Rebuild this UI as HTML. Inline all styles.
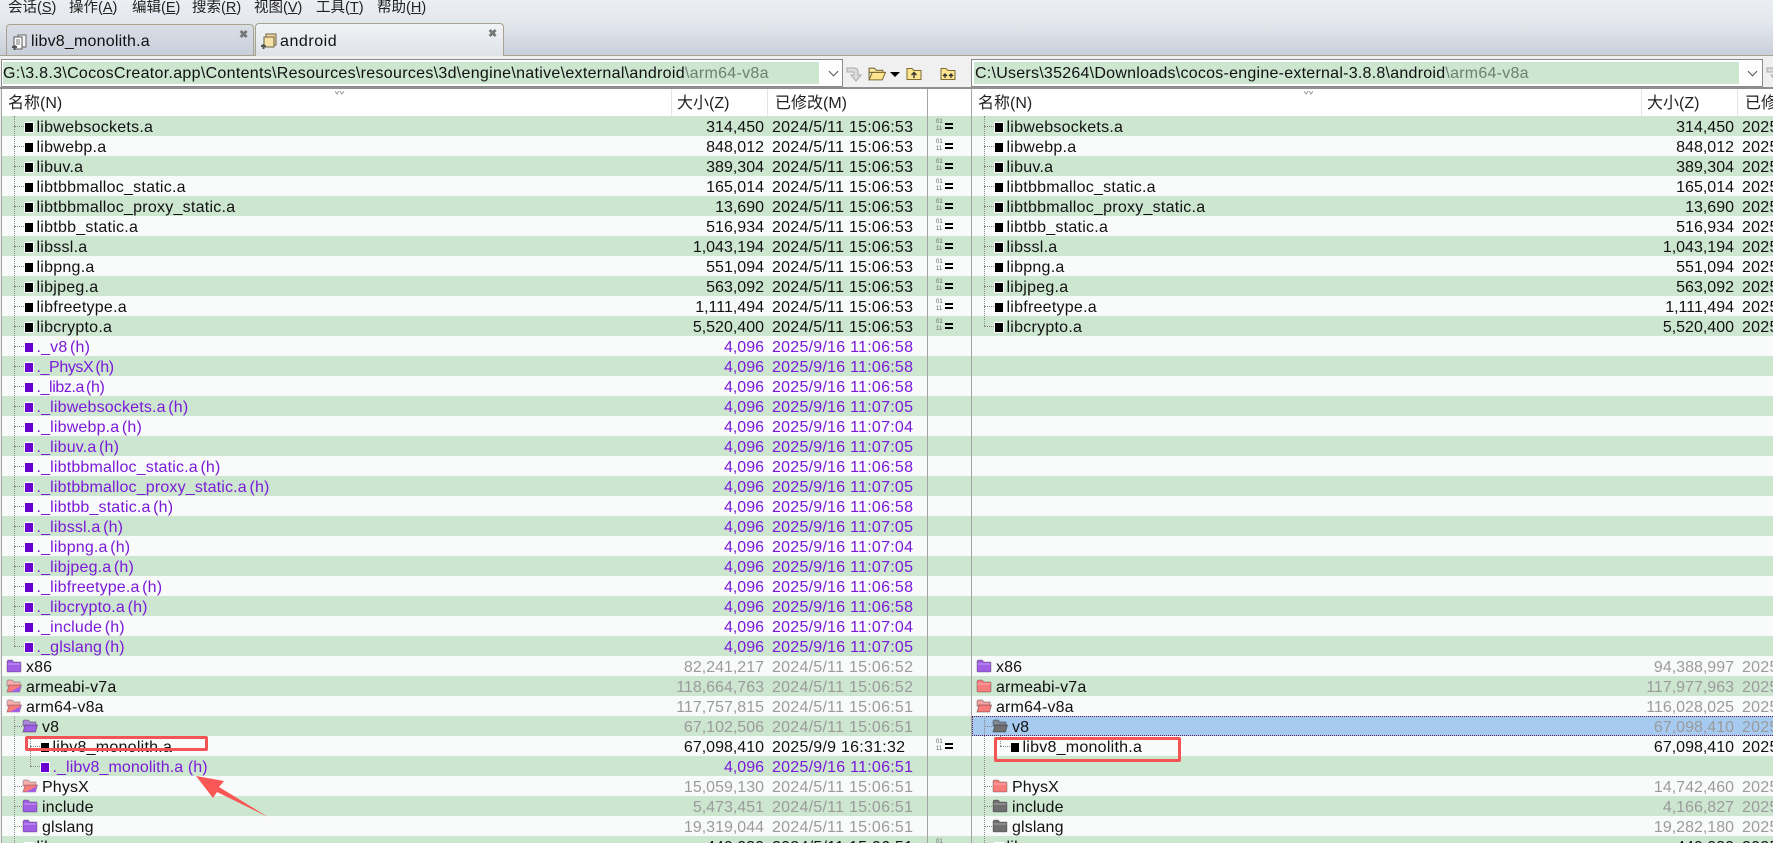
<!DOCTYPE html>
<html><head><meta charset="utf-8"><title>Beyond Compare</title>
<style>
*{margin:0;padding:0}
html,body{width:1773px;height:843px;overflow:hidden;background:#f0f0f0}
body{position:relative;font:16px/20px "Liberation Sans","Noto Sans CJK SC",sans-serif;color:#111}
.abs,.top,.tab,.m,.ab,.pane,.hd,.sep{position:absolute}
.top{left:0;top:0;width:1773px;height:55px;background:linear-gradient(#eceef3,#e4e7ed 40%,#c9cfda)}
.m{top:-2px;font-size:14.5px;color:#222}
.tab{height:31px;border:1px solid #a8a38f;border-bottom:0;border-radius:4px 4px 0 0;box-sizing:border-box;line-height:33px}
.tab span{position:absolute;top:0}
.tab u{position:absolute;text-decoration:none;font-size:11px;font-weight:bold;color:#777;line-height:12px}
.line{position:absolute;left:0;top:55px;width:1773px;height:1px;background:#a8a38f}
.tb{position:absolute;left:0;top:56px;width:1773px;height:31px;background:#f0f0f0}
.ab{top:59px;height:28px;background:#fff;border:1px solid #8a8a8a;box-sizing:border-box}
.ab div{position:absolute;top:2px;height:22px;background:#cde6d0;white-space:nowrap;line-height:24px;overflow:hidden;letter-spacing:.3px}
.ab em{font-style:normal;color:#6e7f72}
.ch{position:absolute;width:6px;height:6px;border:solid #555;border-width:0 1px 1px 0;transform:rotate(45deg)}
.rule{position:absolute;left:0;top:87px;width:1773px;height:2px;background:#8f8f8f}
.hd{top:89px;height:27px;background:#fff}
.hd span{position:absolute;top:5px;color:#222;white-space:nowrap}
.hd i{position:absolute;top:0;width:1px;height:27px;background:#e4e4e4}
.pane{top:116px;height:727px;overflow:hidden}
.r{position:relative;height:20px;width:925px;background:#f9fbfa;white-space:nowrap}
.r:nth-child(odd){background:#cde6d0}
.r b,.r i,.r s{position:absolute;top:2px;font-weight:normal;font-style:normal;text-decoration:none}
.r b{left:34.5px;letter-spacing:.25px}
.r i{right:163px}
.r s{left:770px;letter-spacing:.25px}
.r em{position:absolute;left:22px;top:6px;width:8px;height:9px;background:#000;border:1px solid #fff}
.r::before{content:"";position:absolute;left:12px;top:10px;width:10px;border-top:1px dotted #888}
.n::before{display:none}
.p{color:#7a1ad8}.p em{background:#6a00d0}
.p b{letter-spacing:.17px;word-spacing:-2px}
.g{color:#9b9b9b}.g b{color:#111;letter-spacing:.13px}
.f{position:absolute;left:4px;top:3px;width:16px;height:14px}
.n b{left:24px}
.d1::before{left:12px;width:8px;display:block}
.d1 .f{left:20px}
.d1 b{left:40px}
.d2::before{left:28px;width:10px}
.d2 em{left:38px}
.d2 b{left:50.5px}
.pu{color:#a05fe4}.pi{color:#f77d7d}.gy{color:#6f6f6f}
.sel{background:#a6caf0!important}
.sel::after{content:"";position:absolute;inset:0;border:1px dotted #5a1f55;box-sizing:border-box}
.vl{position:absolute;width:0;border-left:1px dotted #888}
.sep{top:89px;width:1px;height:754px;background:#a3a3a3}
.gut{position:absolute;left:928px;top:116px;width:43px;height:727px;overflow:hidden}
.gut div{position:relative;height:20px;background:#f9fbfa}
.gut div:nth-child(odd){background:#cde6d0}
.gut .e::before{content:"01";position:absolute;left:8px;top:3px;font:6px/7px "Liberation Sans",sans-serif;color:#666}
.gut .e::after{content:"";position:absolute;left:17px;top:7px;width:8px;height:2px;border:solid #000;border-width:2px 0;}
.gut .e span{position:absolute;left:8px;top:10px;font:6px/7px "Liberation Sans",sans-serif;color:#666}
</style></head><body>
<svg width="0" height="0" style="position:absolute"><defs>
<symbol id="fc" viewBox="0 0 16 14"><path d="M1 3Q1 1 3 1H6L8 3H14Q15 3 15 4V12Q15 13 14 13H2Q1 13 1 12Z" fill="currentColor" stroke="#0004"/><path d="M1.5 5H14.5" stroke="#fff6"/></symbol>
<symbol id="fo" viewBox="0 0 16 14"><path d="M1 3Q1 1 3 1H6L8 3H14V7H1Z" fill="currentColor" fill-opacity=".7" stroke="#0005"/><path d="M1 13L3 6H15.5L13.5 13Z" fill="currentColor" stroke="#0005"/></symbol>
<symbol id="fm" viewBox="0 0 16 14"><path d="M1 3Q1 1 3 1H6L8 3H14V7H1Z" fill="#f7b0b0" stroke="#0004"/><path d="M1 13L3 6H15.5L13.5 13Z" fill="#f77d7d" stroke="#0004"/><path d="M4 13L15 7L13.5 13Z" fill="#a05fe4"/></symbol>
<symbol id="yf" viewBox="0 0 16 14"><path d="M1 2H6L8 4H15V13H1Z" fill="#fce58e" stroke="#7e6c35"/></symbol>
<symbol id="yo" viewBox="0 0 17 14"><path d="M1 2H6L8 4H14V6H1Z" fill="#fbe9a8" stroke="#7e6c35"/><path d="M1 13L4 6H16.5L13.5 13Z" fill="#fce58e" stroke="#7e6c35"/><path d="M1 2V13" stroke="#7e6c35"/></symbol>
</defs></svg>

<div class="top"></div>
<span class="m" style="left:8px">会话(<u>S</u>)</span>
<span class="m" style="left:69px">操作(<u>A</u>)</span>
<span class="m" style="left:132px">编辑(<u>E</u>)</span>
<span class="m" style="left:192px">搜索(<u>R</u>)</span>
<span class="m" style="left:254px">视图(<u>V</u>)</span>
<span class="m" style="left:316px">工具(<u>T</u>)</span>
<span class="m" style="left:377px">帮助(<u>H</u>)</span>

<div class="tab" style="left:6px;top:24px;width:248px;background:linear-gradient(#dadee6,#c9cfda)">
<svg class="abs" style="left:4px;top:9px" width="18" height="18" viewBox="0 0 18 18"><path d="M7 1H15V13H7Z" fill="#f4f4f4" stroke="#666"/><path d="M3 3H11V15H3Z" fill="#fff" stroke="#555"/><path d="M5 6H9M5 8H9M5 10H9" stroke="#777"/><path d="M1 13H6M3.5 11V16" stroke="#555" stroke-width="2"/></svg>
<span style="left:24px;letter-spacing:.2px">libv8_monolith.a</span><u style="left:232px;top:4px">✖</u></div>
<div class="tab" style="left:255px;top:23px;width:249px;height:33px;background:linear-gradient(#f1f3f6,#dfe2e9);z-index:2;line-height:35px">
<svg class="abs" style="left:4px;top:8px" width="18" height="18" viewBox="0 0 18 18"><path d="M6 2H16V13H6Z" fill="#f0d9a0" stroke="#6c6242"/><path d="M4 5H14V15H4Z" fill="#f7e3a8" stroke="#6c6242"/><path d="M1 14H6M3.5 12V17" stroke="#555" stroke-width="2"/></svg>
<span style="left:24px;letter-spacing:.55px">android</span><u style="left:232px;top:4px">✖</u></div>
<div class="line"></div>
<div class="tb"></div>

<div class="ab" style="left:1px;width:842px"><div style="left:1px;width:816px">G:\3.8.3\CocosCreator.app\Contents\Resources\resources\3d\engine\native\external\android<em>\arm64-v8a</em></div><span class="ch" style="left:828px;top:8px"></span></div>
<svg class="abs" style="left:846px;top:66px" width="16" height="16" viewBox="0 0 16 16"><path d="M1 2H8Q12 2 12 6V9H15L10 15L5 9H8V6H1Z" fill="#ddd" stroke="#aaa"/></svg>
<svg class="abs" style="left:868px;top:66px" width="18" height="15"><use href="#yo"/></svg>
<div class="abs" style="left:890px;top:72px;width:0;height:0;border:5px solid transparent;border-top:5px solid #000;border-bottom:0"></div>
<svg class="abs" style="left:906px;top:66px" width="16" height="15"><use href="#yf"/><path d="M8 12V7M5.5 9L8 6.5L10.5 9" stroke="#333" fill="none" stroke-width="1.4"/></svg>
<svg class="abs" style="left:940px;top:66px" width="16" height="15"><use href="#yf"/><path d="M5 12V8M3 10L5 8L7 10M11 12V8M9 10L11 8L13 10" stroke="#333" fill="none" stroke-width="1.3"/></svg>
<div class="ab" style="left:971px;width:792px"><div style="left:2px;width:765px;padding-left:1px;box-sizing:border-box;letter-spacing:.25px">C:\Users\35264\Downloads\cocos-engine-external-3.8.8\android<em>\arm64-v8a</em></div><span class="ch" style="left:777px;top:8px"></span></div>
<svg class="abs" style="left:1766px;top:66px" width="16" height="16" viewBox="0 0 16 16"><path d="M1 2H8Q12 2 12 6V9H15L10 15L5 9H8V6H1Z" fill="#ddd" stroke="#aaa"/></svg>
<div class="rule"></div>

<div class="hd" style="left:2px;width:925px"><span style="left:6px">名称(N)</span><i style="left:669px"></i><span style="left:675px">大小(Z)</span><i style="left:765px"></i><span style="left:773px">已修改(M)</span><svg class="abs" style="left:333px;top:2px" width="9" height="4"><path d="M0 0L2 3L4 0M5 0L7 3L9 0" fill="none" stroke="#999"/></svg></div>
<div class="hd" style="left:928px;width:43px"></div>
<div class="hd" style="left:972px;width:801px;overflow:hidden"><span style="left:6px">名称(N)</span><i style="left:669px"></i><span style="left:675px">大小(Z)</span><i style="left:765px"></i><span style="left:773px">已修改(M)</span><svg class="abs" style="left:332px;top:2px" width="9" height="4"><path d="M0 0L2 3L4 0M5 0L7 3L9 0" fill="none" stroke="#999"/></svg></div>

<div class="pane" style="left:2px;width:925px">
<div class="r"><em></em><b>libwebsockets.a</b><i>314,450</i><s>2024/5/11 15:06:53</s></div>
<div class="r"><em></em><b>libwebp.a</b><i>848,012</i><s>2024/5/11 15:06:53</s></div>
<div class="r"><em></em><b>libuv.a</b><i>389,304</i><s>2024/5/11 15:06:53</s></div>
<div class="r"><em></em><b>libtbbmalloc_static.a</b><i>165,014</i><s>2024/5/11 15:06:53</s></div>
<div class="r"><em></em><b>libtbbmalloc_proxy_static.a</b><i>13,690</i><s>2024/5/11 15:06:53</s></div>
<div class="r"><em></em><b>libtbb_static.a</b><i>516,934</i><s>2024/5/11 15:06:53</s></div>
<div class="r"><em></em><b>libssl.a</b><i>1,043,194</i><s>2024/5/11 15:06:53</s></div>
<div class="r"><em></em><b>libpng.a</b><i>551,094</i><s>2024/5/11 15:06:53</s></div>
<div class="r"><em></em><b>libjpeg.a</b><i>563,092</i><s>2024/5/11 15:06:53</s></div>
<div class="r"><em></em><b>libfreetype.a</b><i>1,111,494</i><s>2024/5/11 15:06:53</s></div>
<div class="r"><em></em><b>libcrypto.a</b><i>5,520,400</i><s>2024/5/11 15:06:53</s></div>
<div class="r p"><em></em><b>._v8 (h)</b><i>4,096</i><s>2025/9/16 11:06:58</s></div>
<div class="r p"><em></em><b style="letter-spacing:-.4px">._PhysX (h)</b><i>4,096</i><s>2025/9/16 11:06:58</s></div>
<div class="r p"><em></em><b style="letter-spacing:-.4px">._libz.a (h)</b><i>4,096</i><s>2025/9/16 11:06:58</s></div>
<div class="r p"><em></em><b>._libwebsockets.a (h)</b><i>4,096</i><s>2025/9/16 11:07:05</s></div>
<div class="r p"><em></em><b>._libwebp.a (h)</b><i>4,096</i><s>2025/9/16 11:07:04</s></div>
<div class="r p"><em></em><b>._libuv.a (h)</b><i>4,096</i><s>2025/9/16 11:07:05</s></div>
<div class="r p"><em></em><b>._libtbbmalloc_static.a (h)</b><i>4,096</i><s>2025/9/16 11:06:58</s></div>
<div class="r p"><em></em><b>._libtbbmalloc_proxy_static.a (h)</b><i>4,096</i><s>2025/9/16 11:07:05</s></div>
<div class="r p"><em></em><b>._libtbb_static.a (h)</b><i>4,096</i><s>2025/9/16 11:06:58</s></div>
<div class="r p"><em></em><b>._libssl.a (h)</b><i>4,096</i><s>2025/9/16 11:07:05</s></div>
<div class="r p"><em></em><b>._libpng.a (h)</b><i>4,096</i><s>2025/9/16 11:07:04</s></div>
<div class="r p"><em></em><b>._libjpeg.a (h)</b><i>4,096</i><s>2025/9/16 11:07:05</s></div>
<div class="r p"><em></em><b>._libfreetype.a (h)</b><i>4,096</i><s>2025/9/16 11:06:58</s></div>
<div class="r p"><em></em><b>._libcrypto.a (h)</b><i>4,096</i><s>2025/9/16 11:06:58</s></div>
<div class="r p"><em></em><b>._include (h)</b><i>4,096</i><s>2025/9/16 11:07:04</s></div>
<div class="r p"><em></em><b>._glslang (h)</b><i>4,096</i><s>2025/9/16 11:07:05</s></div>
<div class="r g n"><svg class="f pu"><use href="#fc"/></svg><b>x86</b><i>82,241,217</i><s>2024/5/11 15:06:52</s></div>
<div class="r g n"><svg class="f"><use href="#fm"/></svg><b>armeabi-v7a</b><i>118,664,763</i><s>2024/5/11 15:06:52</s></div>
<div class="r g n"><svg class="f"><use href="#fm"/></svg><b>arm64-v8a</b><i>117,757,815</i><s>2024/5/11 15:06:51</s></div>
<div class="r g d1"><svg class="f pu"><use href="#fo"/></svg><b>v8</b><i>67,102,506</i><s>2024/5/11 15:06:51</s></div>
<div class="r d2"><em></em><b>libv8_monolith.a</b><i>67,098,410</i><s>2025/9/9 16:31:32</s></div>
<div class="r p d2"><em></em><b style="word-spacing:0;letter-spacing:.1px">._libv8_monolith.a (h)</b><i>4,096</i><s>2025/9/16 11:06:51</s></div>
<div class="r g d1"><svg class="f"><use href="#fm"/></svg><b>PhysX</b><i>15,059,130</i><s>2024/5/11 15:06:51</s></div>
<div class="r g d1"><svg class="f pu"><use href="#fc"/></svg><b>include</b><i>5,473,451</i><s>2024/5/11 15:06:51</s></div>
<div class="r g d1"><svg class="f pu"><use href="#fc"/></svg><b>glslang</b><i>19,319,044</i><s>2024/5/11 15:06:51</s></div>
<div class="r"><em></em><b>lib</b><i>449,030</i><s>2024/5/11 15:06:51</s></div>
<span class="vl" style="left:12px;top:0;height:530px"></span>
<span class="vl" style="left:12px;top:600px;height:127px"></span>
<span class="vl" style="left:28px;top:620px;height:30px"></span>
</div>

<div class="gut">
<div class="e"><span>11</span></div><div class="e"><span>11</span></div><div class="e"><span>11</span></div><div class="e"><span>11</span></div><div class="e"><span>11</span></div><div class="e"><span>11</span></div><div class="e"><span>11</span></div><div class="e"><span>11</span></div><div class="e"><span>11</span></div><div class="e"><span>11</span></div><div class="e"><span>11</span></div>
<div></div><div></div><div></div><div></div><div></div><div></div><div></div><div></div><div></div><div></div><div></div><div></div><div></div><div></div><div></div><div></div><div></div><div></div><div></div><div></div>
<div class="e"><span>11</span></div>
<div></div><div></div><div></div><div></div>
<div class="e"><span>11</span></div>
</div>

<div class="pane" style="left:972px;width:801px">
<div class="r"><em></em><b>libwebsockets.a</b><i>314,450</i><s>2025/9/9 16:31:32</s></div>
<div class="r"><em></em><b>libwebp.a</b><i>848,012</i><s>2025/9/9 16:31:32</s></div>
<div class="r"><em></em><b>libuv.a</b><i>389,304</i><s>2025/9/9 16:31:32</s></div>
<div class="r"><em></em><b>libtbbmalloc_static.a</b><i>165,014</i><s>2025/9/9 16:31:32</s></div>
<div class="r"><em></em><b>libtbbmalloc_proxy_static.a</b><i>13,690</i><s>2025/9/9 16:31:32</s></div>
<div class="r"><em></em><b>libtbb_static.a</b><i>516,934</i><s>2025/9/9 16:31:32</s></div>
<div class="r"><em></em><b>libssl.a</b><i>1,043,194</i><s>2025/9/9 16:31:32</s></div>
<div class="r"><em></em><b>libpng.a</b><i>551,094</i><s>2025/9/9 16:31:32</s></div>
<div class="r"><em></em><b>libjpeg.a</b><i>563,092</i><s>2025/9/9 16:31:32</s></div>
<div class="r"><em></em><b>libfreetype.a</b><i>1,111,494</i><s>2025/9/9 16:31:32</s></div>
<div class="r"><em></em><b>libcrypto.a</b><i>5,520,400</i><s>2025/9/9 16:31:32</s></div>
<div class="r n"></div><div class="r n"></div><div class="r n"></div><div class="r n"></div><div class="r n"></div><div class="r n"></div><div class="r n"></div><div class="r n"></div><div class="r n"></div><div class="r n"></div><div class="r n"></div><div class="r n"></div><div class="r n"></div><div class="r n"></div><div class="r n"></div><div class="r n"></div>
<div class="r g n"><svg class="f pu"><use href="#fc"/></svg><b>x86</b><i>94,388,997</i><s>2025/9/9 16:31:32</s></div>
<div class="r g n"><svg class="f pi"><use href="#fc"/></svg><b>armeabi-v7a</b><i>117,977,963</i><s>2025/9/9 16:31:32</s></div>
<div class="r g n"><svg class="f pi"><use href="#fo"/></svg><b>arm64-v8a</b><i>116,028,025</i><s>2025/9/9 16:31:32</s></div>
<div class="r g d1 sel"><svg class="f gy"><use href="#fo"/></svg><b>v8</b><i>67,098,410</i><s>2025/9/9 16:31:32</s></div>
<div class="r d2"><em></em><b>libv8_monolith.a</b><i>67,098,410</i><s>2025/9/9 16:31:32</s></div>
<div class="r n"></div>
<div class="r g d1"><svg class="f pi"><use href="#fc"/></svg><b>PhysX</b><i>14,742,460</i><s>2025/9/9 16:31:32</s></div>
<div class="r g d1"><svg class="f gy"><use href="#fc"/></svg><b>include</b><i>4,166,827</i><s>2025/9/9 16:31:32</s></div>
<div class="r g d1"><svg class="f gy"><use href="#fc"/></svg><b>glslang</b><i>19,282,180</i><s>2025/9/9 16:31:32</s></div>
<div class="r"><em></em><b>lib</b><i>449,030</i><s>2025/9/9 16:31:32</s></div>
<span class="vl" style="left:12px;top:0;height:210px"></span>
<span class="vl" style="left:12px;top:600px;height:127px"></span>
<span class="vl" style="left:28px;top:620px;height:10px"></span>
</div>

<div class="sep" style="left:1px"></div>
<div class="sep" style="left:927px"></div>
<div class="sep" style="left:971px"></div>

<div class="abs" style="left:25px;top:736px;width:183px;height:15px;border:3px solid #f55454;border-radius:2px;box-sizing:border-box"></div>
<div class="abs" style="left:994px;top:737px;width:187px;height:25px;border:3px solid #f55454;border-radius:2px;box-sizing:border-box"></div>
<svg class="abs" style="left:0;top:0;pointer-events:none" width="1773" height="843"><polygon points="196,776 224,781 219,787 268,817 217,792 213,798" fill="#f95656"/></svg>
</body></html>
